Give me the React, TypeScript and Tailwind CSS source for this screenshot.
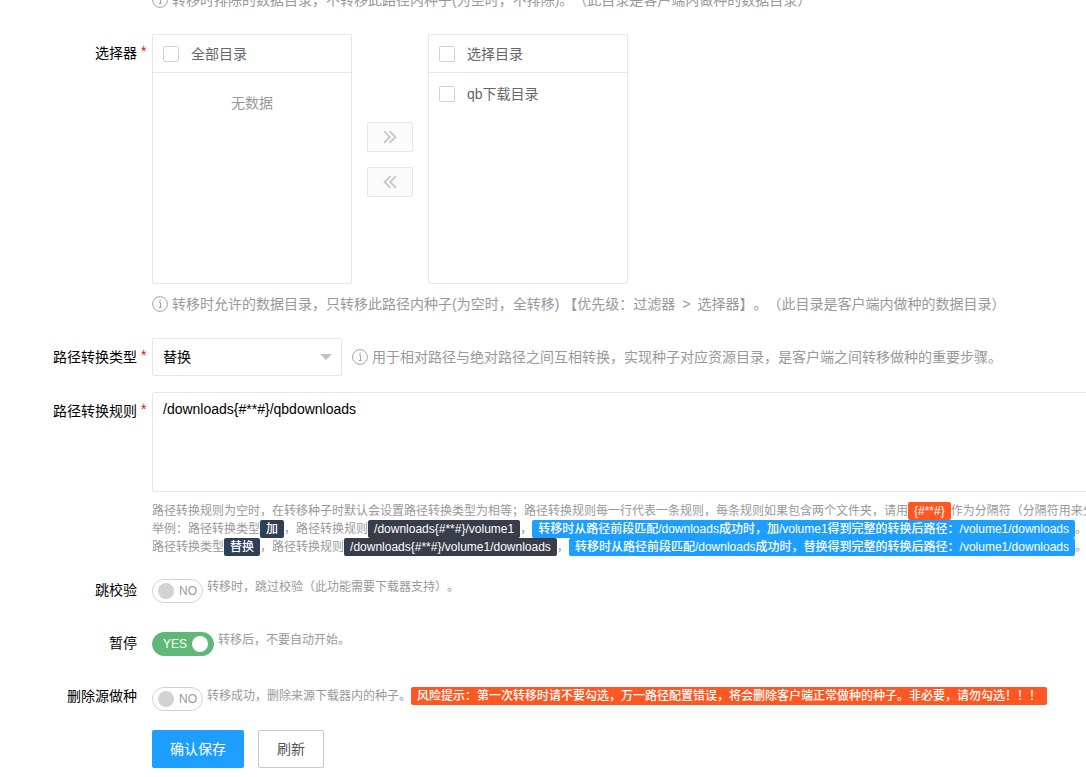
import { useState } from "react";
import type { ReactNode } from "react";

const HINT = "flex items-center gap-1 whitespace-nowrap text-sm leading-5 text-[#999]";

function InfoIcon() {
  return (
    <svg viewBox="0 0 16 16" className="size-4 shrink-0" fill="none" stroke="#999" aria-hidden="true">
      <circle cx="8" cy="8" r="7.4" strokeWidth="0.9" />
      <path d="M7 6.5H8.5V11.5M6.8 11.5H9.6" strokeWidth="0.9" />
      <circle cx="8.1" cy="4.5" r="0.7" fill="#999" stroke="none" />
    </svg>
  );
}

function DoubleChevron({ left = false }: { left?: boolean }) {
  return (
    <svg viewBox="0 0 14 14" className="size-3.5" fill="none" stroke="#c9c9c9" strokeWidth="1.9" aria-hidden="true">
      {left ? (
        <path d="M7.4 1.2L1.6 7L7.4 12.8M13 1.2L7.2 7L13 12.8" />
      ) : (
        <path d="M1 1.2L6.8 7L1 12.8M6.6 1.2L12.4 7L6.6 12.8" />
      )}
    </svg>
  );
}

function FormRow({
  label,
  htmlFor,
  required,
  children,
}: {
  label: string;
  htmlFor: string;
  required?: boolean;
  children: ReactNode;
}) {
  return (
    <div className="flex">
      <label htmlFor={htmlFor} className="flex w-38 shrink-0 justify-end py-[9px] text-sm leading-5 text-black">
        {label}
        <span className="w-[15px] pl-1 leading-4 text-[#f00]">{required && "*"}</span>
      </label>
      <div className="min-w-0 flex-1">{children}</div>
    </div>
  );
}

function CheckItem({ id, label }: { id: string; label: string }) {
  return (
    <label className="flex items-center gap-3 text-sm leading-5 text-[#666]">
      <input id={id} type="checkbox" className="size-4 appearance-none rounded-xs border border-[#d2d2d2] bg-white checked:bg-[#5fb878]" />
      {label}
    </label>
  );
}

function TransferPanel({ id, title, items }: { id: string; title: string; items: string[] }) {
  return (
    <div className="h-[250px] w-50 border border-[#e6e6e6] rounded-xs">
      <div className="flex h-[38px] items-center border-b border-[#e6e6e6] px-2.5">
        <CheckItem id={id} label={title} />
      </div>
      {items.length === 0 ? (
        <p className="py-5 text-center text-sm leading-5 text-[#999]">无数据</p>
      ) : (
        <ul className="px-2.5 py-[11px]">
          {items.map((item) => (
            <li key={item}>
              <CheckItem id={`${id}-${item}`} label={item} />
            </li>
          ))}
        </ul>
      )}
    </div>
  );
}

function Badge({ color, children }: { color: string; children: ReactNode }) {
  return <span className={`inline-block rounded-xs px-1.5 align-top font-medium text-white ${color}`}>{children}</span>;
}

function Switch({ id, defaultOn = false }: { id: string; defaultOn?: boolean }) {
  const [on, setOn] = useState(defaultOn);
  return (
    <label
      className={`flex h-6 shrink-0 items-center gap-[5px] rounded-full border px-[5px] text-xs ${
        on ? "flex-row-reverse border-[#5fb878] bg-[#5fb878] pl-2.5 text-white" : "border-[#d2d2d2] bg-white text-[#999]"
      }`}
    >
      <input id={id} type="checkbox" checked={on} onChange={() => setOn(!on)} className="sr-only" />
      <span className={`size-4 rounded-full ${on ? "bg-white" : "bg-[#d2d2d2]"}`} />
      <span>{on ? "YES" : "NO"}</span>
    </label>
  );
}

export default function App() {
  const [rules, setRules] = useState("/downloads{#**#}/qbdownloads");

  return (
    <main
      lang="zh-CN"
      className="overflow-hidden bg-white pb-2 font-['Liberation_Sans','Noto_Sans_CJK_SC',sans-serif] [text-spacing-trim:space-all]"
    >
      <p className={`${HINT} -mt-2.5 ml-38`}>
        <InfoIcon />
        转移时排除的数据目录，不转移此路径内种子(为空时，不排除)。（此目录是客户端内做种的数据目录）
      </p>

      <form className="mt-6" onSubmit={(e) => e.preventDefault()}>
        <FormRow label="选择器" htmlFor="all" required>
          <div className="flex items-center gap-[15px]">
            <TransferPanel id="all" title="全部目录" items={[]} />
            <div className="flex flex-col gap-[15px]">
              <button type="button" disabled aria-label="右移" className="flex h-[30px] w-[46px] items-center justify-center rounded-xs border border-[#e6e6e6] bg-[#fbfbfb]">
                <DoubleChevron />
              </button>
              <button type="button" disabled aria-label="左移" className="flex h-[30px] w-[46px] items-center justify-center rounded-xs border border-[#e6e6e6] bg-[#fbfbfb]">
                <DoubleChevron left />
              </button>
            </div>
            <TransferPanel id="selected" title="选择目录" items={["qb下载目录"]} />
          </div>
          <p className={`${HINT} mt-2.5`}>
            <InfoIcon />
            <span>
              转移时允许的数据目录，只转移此路径内种子(为空时，全转移) 【优先级：过滤器
              <span className="px-[7px]">&gt;</span>
              选择器】。（此目录是客户端内做种的数据目录）
            </span>
          </p>
        </FormRow>

        <div className="mt-6">
          <FormRow label="路径转换类型" htmlFor="type" required>
            <div className="flex items-center gap-2.5">
              <div className="relative w-[190px]">
                <select id="type" defaultValue="替换" className="h-[38px] w-full appearance-none rounded-xs border border-[#e6e6e6] bg-white px-2.5 text-sm text-black">
                  <option>相等</option>
                  <option>加</option>
                  <option>减</option>
                  <option>替换</option>
                </select>
                <span className="pointer-events-none absolute top-4 right-2.5 border-x-6 border-t-6 border-x-transparent border-t-[#c2c2c2]" />
              </div>
              <p className={HINT}>
                <InfoIcon />
                用于相对路径与绝对路径之间互相转换，实现种子对应资源目录，是客户端之间转移做种的重要步骤。
              </p>
            </div>
          </FormRow>
        </div>

        <div className="mt-4">
          <FormRow label="路径转换规则" htmlFor="rules" required>
            <div className="-mr-4">
              <textarea
                id="rules"
                value={rules}
                onChange={(e) => setRules(e.target.value)}
                className="block h-[100px] w-full resize-none rounded-xs border border-[#e6e6e6] px-2.5 py-1.5 text-sm leading-5 text-black"
              />
            </div>
            <div className="mt-2.5 text-xs leading-[18px] whitespace-nowrap text-[#999]">
              <p>
                路径转换规则为空时，在转移种子时默认会设置路径转换类型为相等；路径转换规则每一行代表一条规则，每条规则如果包含两个文件夹，请用
                <Badge color="bg-[#ff5722]">{"{#**#}"}</Badge>作为分隔符（分隔符用来分
              </p>
              <p>
                举例：路径转换类型<Badge color="bg-[#2f4056]">加</Badge>，路径转换规则
                <Badge color="bg-[#393d49]">{"/downloads{#**#}/volume1"}</Badge>，
                <Badge color="bg-[#1e9fff]">转移时从路径前段匹配/downloads成功时，加/volume1得到完整的转换后路径：/volume1/downloads</Badge>。
              </p>
              <p>
                路径转换类型<Badge color="bg-[#2f4056]">替换</Badge>，路径转换规则
                <Badge color="bg-[#393d49]">{"/downloads{#**#}/volume1/downloads"}</Badge>，
                <Badge color="bg-[#1e9fff]">转移时从路径前段匹配/downloads成功时，替换得到完整的转换后路径：/volume1/downloads</Badge>。
              </p>
            </div>
          </FormRow>
        </div>

        <div className="mt-[15px] flex flex-col gap-[15px]">
          <FormRow label="跳校验" htmlFor="skip">
            <div className="flex items-start gap-1 pt-2">
              <Switch id="skip" />
              <p className="text-xs leading-4 text-[#999]">转移时，跳过校验（此功能需要下载器支持）。</p>
            </div>
          </FormRow>
          <FormRow label="暂停" htmlFor="paused">
            <div className="flex items-start gap-1 pt-2">
              <Switch id="paused" defaultOn />
              <p className="text-xs leading-4 text-[#999]">转移后，不要自动开始。</p>
            </div>
          </FormRow>
          <FormRow label="删除源做种" htmlFor="delete">
            <div className="flex items-start gap-1 pt-2.5">
              <Switch id="delete" />
              <p className="text-xs leading-[18px] whitespace-nowrap text-[#999]">
                转移成功，删除来源下载器内的种子。
                <Badge color="bg-[#ff5722]">
                  风险提示：第一次转移时请不要勾选，万一路径配置错误，将会删除客户端正常做种的种子。非必要，请勿勾选！！！
                </Badge>
              </p>
            </div>
          </FormRow>
        </div>

        <div className="mt-[15px] ml-38 flex gap-3.5">
          <button type="submit" className="h-[38px] rounded-xs bg-[#1e9fff] px-[18px] text-sm text-white">
            确认保存
          </button>
          <button type="reset" className="h-[38px] rounded-xs border border-[#c9c9c9] bg-white px-[18px] text-sm text-[#555]">
            刷新
          </button>
        </div>
      </form>
    </main>
  );
}
